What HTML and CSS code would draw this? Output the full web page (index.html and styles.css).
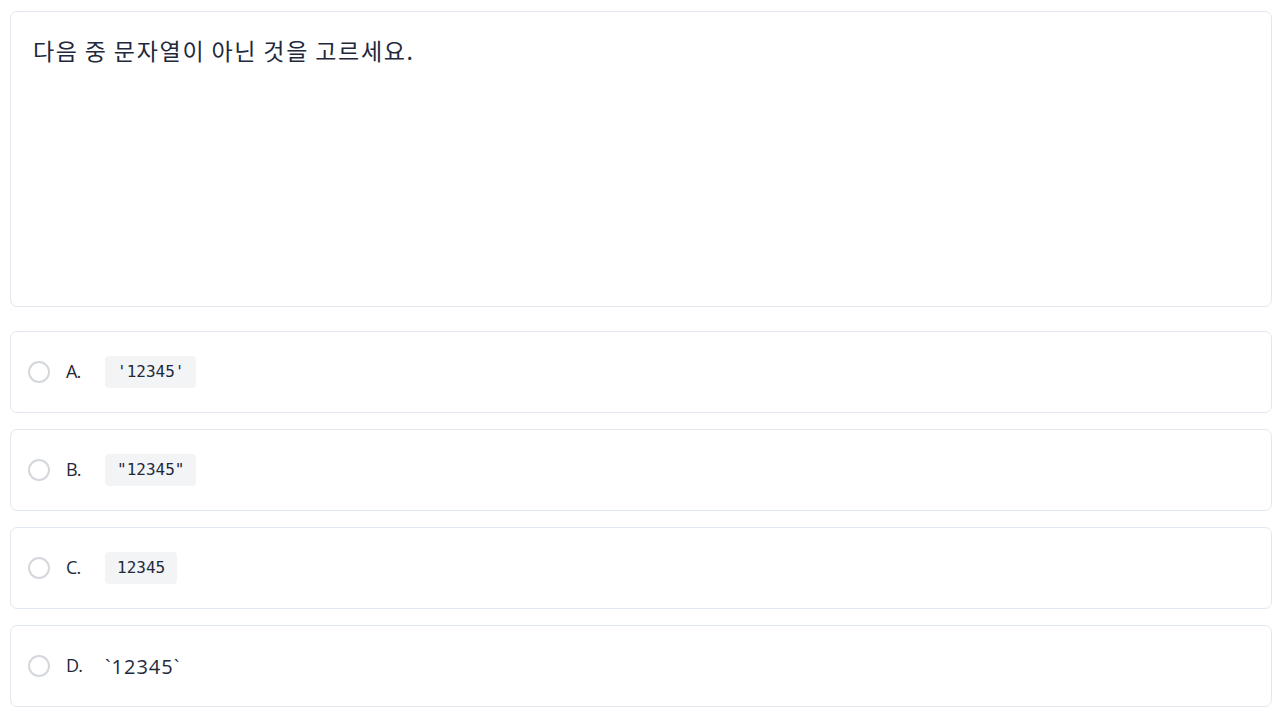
FILE: index.html
```html
<!DOCTYPE html>
<html lang="ko">
<head>
<meta charset="utf-8">
<link rel="stylesheet" href="styles.css">
</head>
<body>
<main class="quiz">
  <section class="question">
    <p class="question-text">다음 중 문자열이 아닌 것을 고르세요.</p>
  </section>
  <ul class="options">
    <li class="option"><span class="radio"></span><span class="label">A.</span><code class="chip">'12345'</code></li>
    <li class="option"><span class="radio"></span><span class="label">B.</span><code class="chip">"12345"</code></li>
    <li class="option"><span class="radio"></span><span class="label">C.</span><code class="chip">12345</code></li>
    <li class="option"><span class="radio"></span><span class="label">D.</span><span class="plain">`12345`</span></li>
  </ul>
</main>
</body>
</html>
```
FILE: styles.css
```css
html, body {
  margin: 0;
  padding: 0;
  background: #ffffff;
}
body {
  padding: 11px 8px 0 10px;
  font-family: "Noto Sans CJK KR", "Noto Sans", sans-serif;
  color: #1e293b;
}
.quiz {
  display: flex;
  flex-direction: column;
  gap: 24px;
}
.question {
  height: 296px;
  box-sizing: border-box;
  border: 1px solid #e2e8f0;
  border-radius: 7px;
  padding: 23px 22px;
}
.question-text {
  margin: 0;
  font-size: 23px;
  line-height: 30px;
  letter-spacing: 1.7px;
  word-spacing: -2px;
  color: #1e293b;
}
.options {
  list-style: none;
  margin: 0;
  padding: 0;
  display: flex;
  flex-direction: column;
  gap: 16px;
}
.option {
  display: flex;
  align-items: center;
  height: 82px;
  box-sizing: border-box;
  border: 1px solid #e2e8f0;
  border-radius: 7px;
  padding: 0 17px;
}
.radio {
  width: 22px;
  height: 22px;
  box-sizing: border-box;
  border: 2px solid #d4d7dc;
  border-radius: 50%;
  flex: none;
}
.label {
  width: 39px;
  margin-left: 16px;
  font-family: "Open Sans", "Noto Sans", sans-serif;
  font-size: 18px;
  line-height: 24px;
  margin-top: -2px;
  color: #1e293b;
  letter-spacing: -0.8px;
}
.chip {
  display: inline-block;
  background: #f3f4f6;
  border-radius: 4px;
  height: 32px;
  line-height: 32px;
  padding: 0 12px;
  font-family: "DejaVu Sans Mono", monospace;
  font-size: 16px;
  color: #1e293b;
}
.plain {
  font-family: "Open Sans", "Noto Sans", sans-serif;
  font-size: 20px;
  letter-spacing: 1px;
  color: #1e293b;
}
```
